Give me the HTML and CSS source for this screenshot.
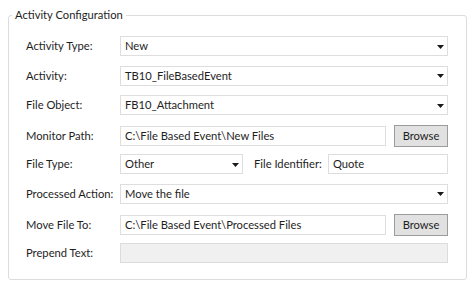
FILE: index.html
```html
<!DOCTYPE html>
<html lang="en">
  <head>
    <meta charset="UTF-8" />
    <title>Activity Configuration</title>
    <link rel="stylesheet" href="styles.css">
  </head>
  <body>
    <div class="page">
      <fieldset class="group">
        <legend>Activity Configuration</legend>

        <div class="row">
          <label>Activity Type:</label>
          <div class="combo"><span>New</span><svg class="arrow" width="7" height="4" viewBox="0 0 7 4"><path d="M0 0h7L3.5 4z"/></svg></div>
        </div>

        <div class="row">
          <label>Activity:</label>
          <div class="combo"><span>TB10_FileBasedEvent</span><svg class="arrow" width="7" height="4" viewBox="0 0 7 4"><path d="M0 0h7L3.5 4z"/></svg></div>
        </div>

        <div class="row">
          <label>File Object:</label>
          <div class="combo"><span>FB10_Attachment</span><svg class="arrow" width="7" height="4" viewBox="0 0 7 4"><path d="M0 0h7L3.5 4z"/></svg></div>
        </div>

        <div class="row">
          <label>Monitor Path:</label>
          <div class="path">
            <div class="textbox">C:\File Based Event\New Files</div>
            <button class="browse">Browse</button>
          </div>
        </div>

        <div class="row">
          <label>File Type:</label>
          <div class="split">
            <div class="combo"><span>Other</span><svg class="arrow" width="7" height="4" viewBox="0 0 7 4"><path d="M0 0h7L3.5 4z"/></svg></div>
            <label class="inner-label">File Identifier:</label>
            <div class="textbox">Quote</div>
          </div>
        </div>

        <div class="row">
          <label>Processed Action:</label>
          <div class="combo"><span>Move the file</span><svg class="arrow" width="7" height="4" viewBox="0 0 7 4"><path d="M0 0h7L3.5 4z"/></svg></div>
        </div>

        <div class="row">
          <label>Move File To:</label>
          <div class="path">
            <div class="textbox">C:\File Based Event\Processed Files</div>
            <button class="browse">Browse</button>
          </div>
        </div>

        <div class="row">
          <label>Prepend Text:</label>
          <div class="textbox disabled"></div>
        </div>
      </fieldset>
    </div>
  </body>
</html>
```

FILE: styles.css
```css
/* Activity configuration dialog */
body {
  margin: 0;
  background: #ffffff;
  font-family: "Lato", "Open Sans", sans-serif;
  font-size: 11.2px;
  color: #1e1e1e;
}

.page {
  padding: 7px 7px 0 8px;
}

.group {
  margin: 0;
  width: 459px;
  box-sizing: border-box;
  border: 1px solid #dcdcdc;
  border-radius: 3px;
  padding: 13px 18px 16px 17px;
  display: flex;
  flex-direction: column;
  gap: 9.6px;
}

.group legend {
  margin-left: -14px;
  padding: 0 3px;
  line-height: 16px;
  height: 16px;
  color: #1e1e1e;
}

.row {
  display: grid;
  grid-template-columns: 94px 1fr;
  align-items: center;
  height: 20px;
}

.row label {
  line-height: 20px;
  white-space: nowrap;
}

.combo,
.textbox {
  box-sizing: border-box;
  height: 20px;
  border: 1px solid #dedede;
  background: #ffffff;
  padding: 0 4px;
  line-height: 18px;
  white-space: nowrap;
  overflow: hidden;
}

.combo {
  display: flex;
  align-items: center;
  justify-content: space-between;
  padding-right: 3px;
}

.arrow {
  fill: #1a1a1a;
  margin-top: 1px;
}

.disabled {
  background: #f0f0f0;
  border-color: #dcdcdc;
}

.path {
  display: grid;
  grid-template-columns: 1fr 54px;
  gap: 8px;
  align-items: center;
}

.browse {
  box-sizing: border-box;
  height: 22px;
  margin: 0;
  padding: 0;
  font: inherit;
  color: #1e1e1e;
  background: #e1e1e1;
  border: 1px solid #9c9c9c;
}

.split {
  display: grid;
  grid-template-columns: 123px 85px 1fr;
  align-items: center;
}

.split .inner-label {
  padding-left: 11px;
}
```
